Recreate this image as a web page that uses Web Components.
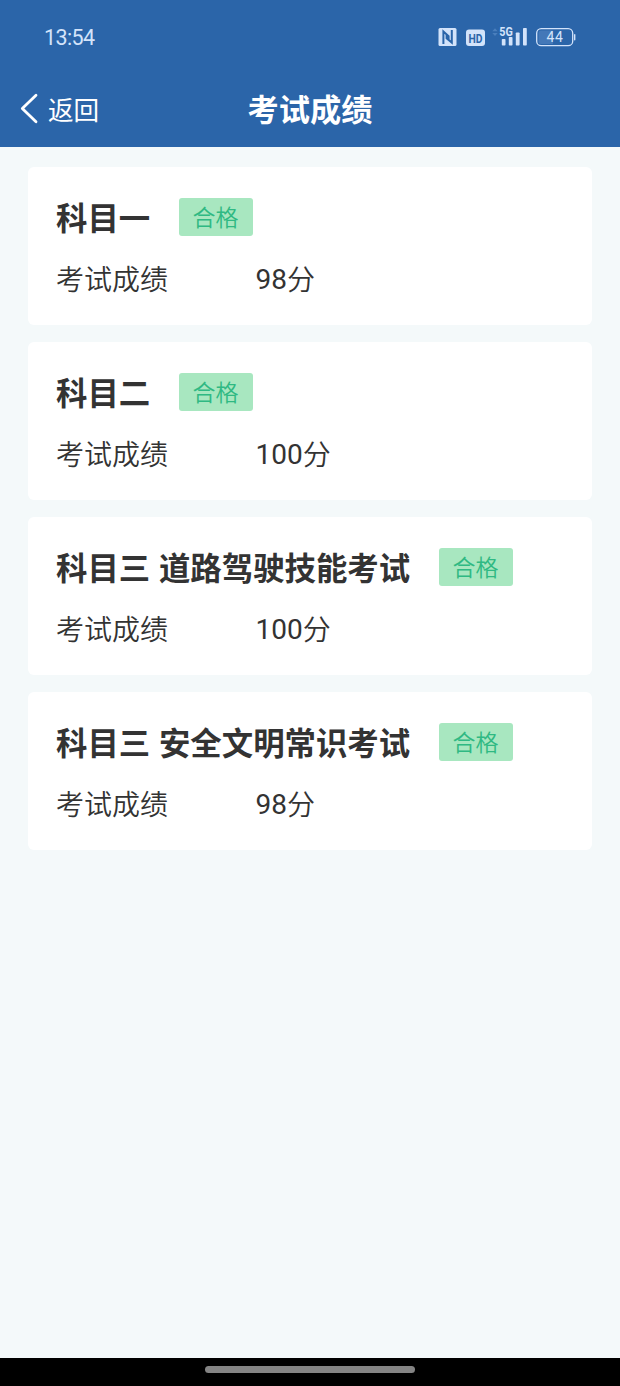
<!DOCTYPE html>
<html lang="zh-CN">
<head>
<meta charset="UTF-8">
<title>考试成绩</title>
<style>
	html, body {
		margin: 0;
		height: 100%;
	}
	body {
		font-family: Roboto, "Noto Sans CJK SC", sans-serif;
		background: #f4f9fa;
		color: #333;
		overflow: hidden;
	}
</style>
</head>
<body>
<score-page>
	<status-bar slot="top" time="13:54" battery="44"></status-bar>
	<nav-header slot="top" back="返回">考试成绩</nav-header>
	<score-card result="合格" score="98" unit="分">科目一</score-card>
	<score-card result="合格" score="100" unit="分">科目二</score-card>
	<score-card result="合格" score="100" unit="分">科目三 道路驾驶技能考试</score-card>
	<score-card result="合格" score="98" unit="分">科目三 安全文明常识考试</score-card>
</score-page>

<script>
class ScorePage extends HTMLElement {
	connectedCallback() {
		const shadow = this.attachShadow({ mode: 'open' });
		shadow.innerHTML = `
  <style>
    :host {
      display: flex;
      flex-direction: column;
      height: 1386px;
    }
    header {
      background: #2b65a9;
      height: 146.6px;
      flex: none;
    }
    main {
      flex: 1;
      display: flex;
      flex-direction: column;
      gap: 17px;
      padding: 20.4px 28px 0;
    }
    footer {
      height: 28px;
      background: #000;
      display: flex;
      justify-content: center;
      align-items: center;
    }
    .handle {
      width: 210px;
      height: 7px;
      margin-bottom: 5px;
      border-radius: 4px;
      background: #848484;
    }
  </style>
  <header><slot name="top"></slot></header>
  <main><slot></slot></main>
  <footer><div class="handle"></div></footer>
  `;
	}
}
customElements.define('score-page', ScorePage);

class StatusBar extends HTMLElement {
	connectedCallback() {
		const shadow = this.attachShadow({ mode: 'open' });
		shadow.innerHTML = `
  <style>
    :host {
      display: flex;
      justify-content: space-between;
      align-items: center;
      height: 74px;
      padding: 0 44px;
      color: #d3e3fa;
    }
    .time {
      font-size: 21.5px;
      letter-spacing: -0.6px;
    }
    svg {
      display: block;
      font-family: Roboto, sans-serif;
    }
  </style>
  <span class="time">${this.getAttribute('time')}</span>
  <svg width="138" height="24" viewBox="438 25 138 24" fill="#d3e3fa">
    <!-- NFC -->
    <rect x="438.5" y="28" width="18" height="18" rx="1.5"/>
    <path d="M443.4 44V31.5L448.6 36.2V40.2M446.6 34.2V38.2L451.8 42.6V30" fill="none" stroke="#2b65a9" stroke-width="2"/>
    <!-- HD -->
    <rect x="466" y="29.5" width="19" height="16.5" rx="3"/>
    <text x="475.5" y="42.6" font-size="13.5" font-weight="700" text-anchor="middle" textLength="14" lengthAdjust="spacingAndGlyphs" fill="#2b65a9">HD</text>
    <!-- data arrows -->
    <path d="M492.3 31.3L495 28.3L497.7 31.3ZM492.3 33L495 36L497.7 33Z" fill="#4a7fbd"/>
    <!-- signal -->
    <text x="499.3" y="35.6" font-size="12.5" font-weight="700" textLength="13.5" lengthAdjust="spacingAndGlyphs">5G</text>
    <rect x="501.8" y="39" width="3.7" height="6.5" rx=".8"/>
    <rect x="508.8" y="37" width="3.7" height="8.5" rx=".8"/>
    <rect x="515.8" y="32.5" width="3.8" height="13" rx=".8"/>
    <rect x="523" y="28" width="3.8" height="17.5" rx=".8"/>
    <!-- battery -->
    <path d="M553 30.5H541Q538.5 30.5 538.5 33V41.4Q538.5 43.9 541 43.9H553Z" fill="#4478b8"/>
    <rect x="536.7" y="28.7" width="36" height="17" rx="4.5" fill="none" stroke="#d3e3fa" stroke-width="1.3"/>
    <rect x="574" y="34" width="1.4" height="6.5" rx=".7"/>
    <text x="554.7" y="42.2" font-size="14" text-anchor="middle" textLength="16.5">${this.getAttribute('battery')}</text>
  </svg>
  `;
	}
}
customElements.define('status-bar', StatusBar);

class NavHeader extends HTMLElement {
	connectedCallback() {
		const shadow = this.attachShadow({ mode: 'open' });
		shadow.innerHTML = `
  <style>
    :host {
      display: grid;
      grid-template-columns: 1fr auto 1fr;
      align-items: center;
      height: 70px;
      padding: 0 20px;
      color: #fff;
    }
    .back {
      display: flex;
      align-items: center;
      gap: 10px;
      font-size: 25.6px;
      line-height: 36px;
    }
    .back span {
      padding-top: 3px;
    }
    .title {
      font-size: 31.2px;
      font-weight: 700;
      line-height: 44px;
      padding-top: 4px;
    }
    svg {
      display: block;
    }
  </style>
  <div class="back">
    <svg width="18" height="32" viewBox="0 0 18 32" fill="none" stroke="#fff" stroke-width="2.8" stroke-linecap="round" stroke-linejoin="round"><path d="M16 2.2L2.3 15.5L16 28.8"/></svg>
    <span>${this.getAttribute('back')}</span>
  </div>
  <div class="title"><slot></slot></div>
  `;
	}
}
customElements.define('nav-header', NavHeader);

class ScoreCard extends HTMLElement {
	connectedCallback() {
		const shadow = this.attachShadow({ mode: 'open' });
		shadow.innerHTML = `
  <style>
    :host {
      display: block;
      box-sizing: border-box;
      height: 158px;
      padding: 31px 28px 0;
      border-radius: 6px;
      background: #fff;
    }
    .head {
      display: flex;
      align-items: center;
      gap: 28.4px;
      height: 38px;
    }
    .name {
      font-size: 31.4px;
      font-weight: 700;
      line-height: 38px;
      padding-top: 6px;
      word-spacing: 1px;
      white-space: nowrap;
    }
    .badge {
      box-sizing: border-box;
      width: 74px;
      height: 38px;
      padding-top: 2px;
      border-radius: 3px;
      background: #a8e7c0;
      color: #2fb983;
      font-size: 23px;
      font-weight: 350;
      line-height: 38px;
      text-align: center;
    }
    .row {
      display: flex;
      margin-top: 25px;
      font-size: 28px;
      font-weight: 350;
      line-height: 40px;
    }
    .label {
      width: 199.5px;
    }
    .score {
      font-weight: 400;
      line-height: 38px;
    }
  </style>
  <div class="head">
    <span class="name"><slot></slot></span>
    <span class="badge">${this.getAttribute('result')}</span>
  </div>
  <div class="row">
    <span class="label">考试成绩</span>
    <span class="score">${this.getAttribute('score')}</span>
    <span>${this.getAttribute('unit')}</span>
  </div>
  `;
	}
}
customElements.define('score-card', ScoreCard);
</script>
</body>
</html>
